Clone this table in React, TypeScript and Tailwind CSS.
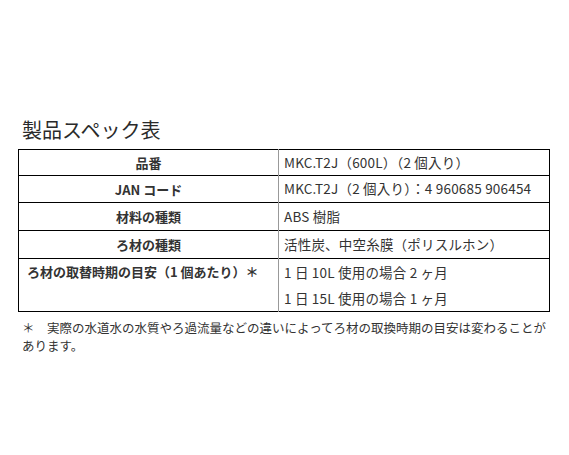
const rows = [
  { label: "品番", value: "MKC.T2J（600L）（2 個入り）", h: "h-[26px]" },
  { label: "JAN コード", value: "MKC.T2J（2 個入り）：4 960685 906454", h: "h-[27px]" },
  { label: "材料の種類", value: "ABS 樹脂", h: "h-[28px]" },
  { label: "ろ材の種類", value: "活性炭、中空糸膜（ポリスルホン）", h: "h-[28px]" },
];

export default function App() {
  return (
    <div
      className="min-h-[455px] w-[569px] bg-white pl-[18px] pt-[116px] text-[#333]"
      style={{ fontFamily: '"Noto Sans CJK JP", "Noto Sans", sans-serif' }}
    >
      {/* Title */}
      <h1 className="ml-[4px] text-[20px] leading-[28px] font-normal text-[#2a2a2a]">製品スペック表</h1>

      {/* Spec table */}
      <table className="mt-[5px] w-[532px] border-collapse border border-black text-[13px]">
        <tbody>
          {rows.map((r) => (
            <tr key={r.label} className="border-b border-black">
              <td className={`${r.h} w-[260px] border-r border-[#999] p-0 text-center font-bold leading-none`}>
                {r.label}
              </td>
              <td className="p-0 pl-[5px] text-[13.5px] leading-none tracking-[0.2px]">{r.value}</td>
            </tr>
          ))}
          <tr>
            <td className="h-[53px] border-r border-[#999] p-0 pl-[8px] align-top font-bold">
              <div className="flex h-[26px] items-center">ろ材の取替時期の目安（1 個あたり）＊</div>
            </td>
            <td className="p-0 pl-[5px] align-top text-[13.5px] tracking-[0.2px]">
              <div className="flex h-[26px] items-center">1 日 10L 使用の場合 2 ヶ月</div>
              <div className="flex h-[26px] items-center">1 日 15L 使用の場合 1 ヶ月</div>
            </td>
          </tr>
        </tbody>
      </table>

      {/* Footnote */}
      <div className="ml-[4px] mt-[7px] text-[12.5px] leading-[18px]">
        <div className="whitespace-nowrap">＊　実際の水道水の水質やろ過流量などの違いによってろ材の取換時期の目安は変わることが</div>
        <div>あります。</div>
      </div>
    </div>
  );
}
